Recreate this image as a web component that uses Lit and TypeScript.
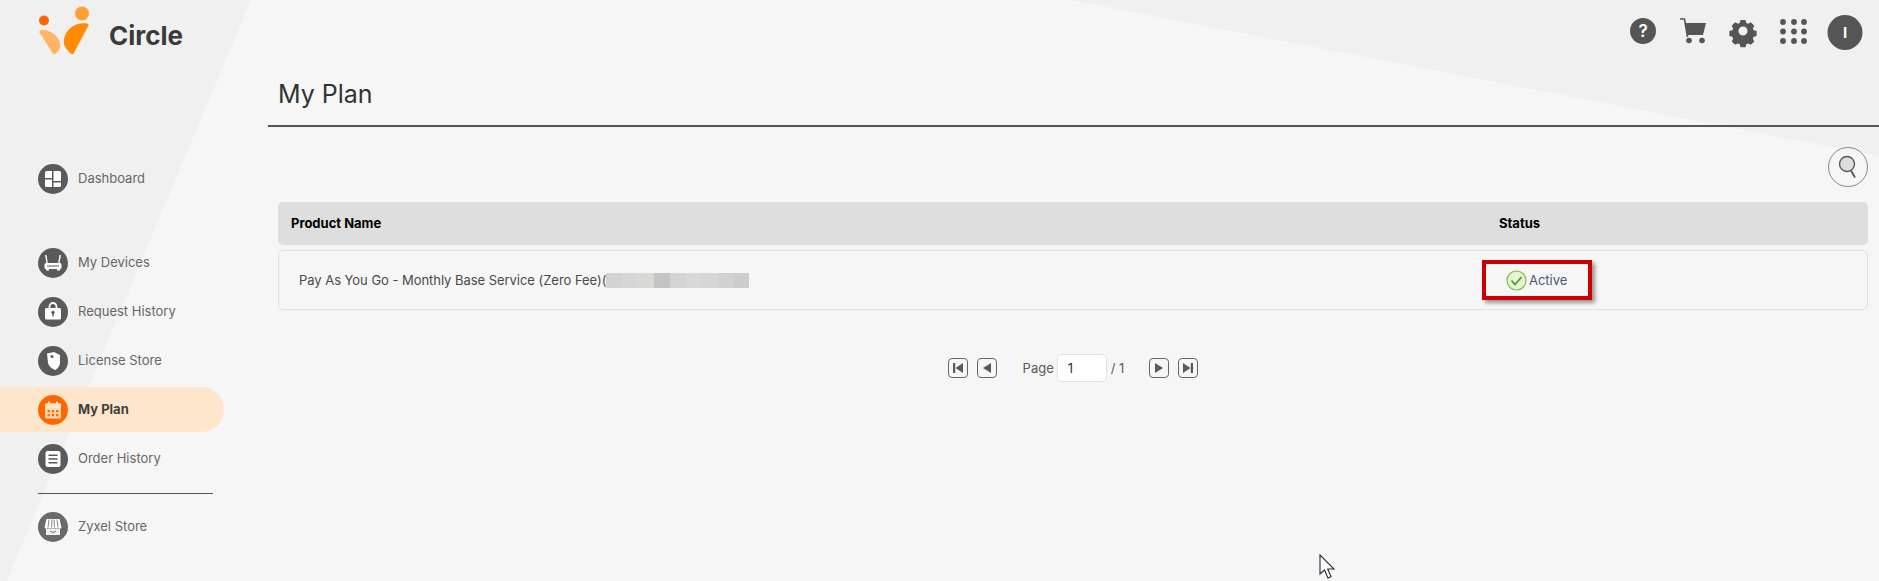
import { LitElement, html, css, svg } from "lit";
import { customElement } from "lit/decorators.js";

const navIcons: Record<string, unknown> = {
  dashboard: svg`<path d="M7 8.500a1.500 1.500 0 0 1 1.500-1.500H14v7H7zM7 15.500h7V23H8.500A1.500 1.500 0 0 1 7 21.500zM15.500 7h6A1.500 1.500 0 0 1 23 8.500V17h-7.500zM15.500 18.500H23v3a1.500 1.500 0 0 1-1.500 1.500h-6z" fill="#fff"/>`,
  devices: svg`<path d="M7 7l1.600 8.500h1.300L8.500 7zM23 7l-1.600 8.500h-1.300L21.500 7z" fill="#fff"/><rect x="6.500" y="15" width="17" height="6" rx="1.500" fill="#fff"/><rect x="9" y="17.500" width="12" height="1" fill="#5a5a5a"/><rect x="8" y="21" width="3" height="1.500" fill="#fff"/><rect x="19" y="21" width="3" height="1.500" fill="#fff"/>`,
  lock: svg`<path d="M11.500 12v-2.500a3.500 3.500 0 0 1 7 0V12" fill="none" stroke="#fff" stroke-width="1.800"/><rect x="7" y="11" width="16" height="11.500" rx="1.500" fill="#fff"/><circle cx="15" cy="15.500" r="1.700" fill="#5a5a5a"/><rect x="14.300" y="15.500" width="1.400" height="4" fill="#5a5a5a"/>`,
  tag: svg`<path d="M9 7.500l7-1.500 6 3v7.500c0 3-2 5.500-4.500 7.500-3.500-1-6.500-3.500-7.500-7z" fill="#fff"/><circle cx="14" cy="10.500" r="1.500" fill="#5a5a5a"/>`,
  calendar: svg`<rect x="7" y="8.500" width="16" height="15" rx="1.500" fill="#ffd9b3"/><rect x="7" y="8.500" width="16" height="4.500" rx="1.500" fill="#ffe8d0"/><rect x="10" y="6.500" width="2" height="3.500" rx="1" fill="#ffe8d0"/><rect x="18" y="6.500" width="2" height="3.500" rx="1" fill="#ffe8d0"/><g fill="#ff6600"><rect x="9.500" y="15" width="2.300" height="2.300"/><rect x="13.800" y="15" width="2.300" height="2.300"/><rect x="18.100" y="15" width="2.300" height="2.300"/><rect x="9.500" y="19" width="2.300" height="2.300"/><rect x="13.800" y="19" width="2.300" height="2.300"/><rect x="18.100" y="19" width="2.300" height="2.300"/></g>`,
  list: svg`<rect x="7.500" y="7" width="15" height="16" rx="2" fill="#fff"/><g fill="#5a5a5a"><rect x="10.500" y="10.500" width="9" height="1.500"/><rect x="10.500" y="14.200" width="9" height="1.500"/><rect x="10.500" y="18" width="9" height="1.500"/></g>`,
  store: svg`<path d="M8.500 7h13l2 8.500a2 2 0 0 1-3 .8 3 3 0 0 1-2.800 0 3 3 0 0 1-2.700 0 3 3 0 0 1-2.700 0 3 3 0 0 1-2.800 0 2 2 0 0 1-3-.8z" fill="#fff"/><path d="M11 7.500l-1 8M14 7.500l-.5 8M16 7.500l.5 8M19 7.500l1 8" stroke="#6a6a6a" stroke-width=".8"/><path d="M8 17h14v6H8z" fill="#fff" opacity=".9"/><path d="M12 19c1.500 1.800 4.500 1.800 6 0" fill="none" stroke="#6a6a6a" stroke-width="1"/>`,
};

const mosaic = ["#d3d3d3", "#d6d6d6", "#d8d8d4", "#c4c4c4", "#d4d4d4", "#d8d8d8", "#d6d6d6", "#d1d1d1", "#cdcdcd"];

@customElement("app-root")
export class AppRoot extends LitElement {
  static styles = css`
    :host {
      display: block;
      position: relative;
      height: 581px;
      overflow: hidden;
      background: #f6f6f6;
      font-family: Inter, "Liberation Sans", sans-serif;
      color: #555;
    }
    .bg { position: absolute; inset: 0; width: 100%; height: 100%; }
    .app { position: relative; display: flex; height: 581px; }
    aside { width: 224px; flex: none; display: flex; flex-direction: column; }
    .brand { height: 70px; display: flex; align-items: flex-start; position: relative; }
    .brand svg { flex: none; }
    .brand span {
      margin: 21px 0 0 -2px;
      font-size: 26px;
      font-weight: 700;
      line-height: 30px;
      color: #3a3a3a;
    }
    nav { display: flex; flex-direction: column; padding-top: 86px; }
    .group { display: flex; flex-direction: column; gap: 4px; }
    .group + .group { margin-top: 39px; }
    .item {
      height: 45px;
      display: flex;
      align-items: center;
      gap: 10px;
      padding-left: 38px;
      font-size: 13px;
      color: #666;
    }
    .item svg { flex: none; }
    .item span { margin-bottom: 2px; }
    .item.active {
      background: #fee6cc;
      border-radius: 0 23px 23px 0;
      color: #3f3f3f;
      font-weight: 700;
    }
    hr {
      border: 0;
      height: 1px;
      background: #555;
      width: 175px;
      margin: 12px 0 10px 38px;
    }
    main { flex: 1; margin-left: 44px; display: flex; flex-direction: column; min-width: 0; }
    .top {
      height: 62px;
      display: flex;
      justify-content: flex-end;
      align-items: center;
      padding-right: 16px;
      flex: none;
    }
    .title {
      height: 63px;
      border-bottom: 2px solid #555;
      padding-left: 10px;
      flex: none;
    }
    h1 {
      margin: 0;
      padding-top: 17px;
      font-size: 25px;
      font-weight: 400;
      line-height: 30px;
      color: #333;
    }
    .content { padding: 20px 11px 0 10px; }
    .tools { display: flex; justify-content: flex-end; margin-bottom: 15px; }
    .search {
      width: 40px;
      height: 40px;
      box-sizing: border-box;
      border: 1px solid #8a8a8a;
      border-radius: 50%;
      display: flex;
      align-items: center;
      justify-content: center;
    }
    .thead, .trow { display: grid; align-items: center; }
    .thead {
      height: 43px;
      box-sizing: border-box;
      padding-bottom: 1px;
      grid-template-columns: 1208px 1fr;
      padding-left: 13px;
      background: #dedede;
      border-radius: 5px;
      color: #000;
      font-size: 13px;
      font-weight: 700;
    }
    .trow {
      margin-top: 5px;
      height: 60px;
      box-sizing: border-box;
      border: 1px solid #e0e0e0;
      border-radius: 5px;
      grid-template-columns: 1183px 1fr;
      padding-left: 20px;
      font-size: 13px;
      letter-spacing: -0.04px;
      color: #4a4a4a;
    }
    .product { display: flex; align-items: center; }
    .mask { display: flex; height: 15px; }
    .mask i { display: block; width: 15.900px; height: 15px; }
    .mark {
      width: 110px;
      height: 40px;
      box-sizing: border-box;
      border: 4px solid #cc0000;
      box-shadow: 3px 3px 4px rgba(0, 0, 0, 0.4);
      display: flex;
      align-items: center;
      padding-left: 20px;
      gap: 2px;
      color: #4f5870;
    }
    .pager {
      margin-top: 44px;
      height: 28px;
      display: flex;
      align-items: center;
      justify-content: center;
      font-size: 13px;
      color: #5a5a5a;
    }
    .pg {
      width: 20px;
      height: 20px;
      box-sizing: border-box;
      border: 1px solid #666;
      border-radius: 4px;
      display: flex;
      align-items: center;
      justify-content: center;
      margin-right: 9px;
    }
    .pg.last { margin-right: 0; }
    .page-label { margin: 0 3px 0 17px; }
    .input {
      width: 50px;
      height: 28px;
      box-sizing: border-box;
      background: #fff;
      border: 1px solid #e2e2e2;
      border-radius: 5px;
      display: flex;
      align-items: center;
      padding-left: 10px;
      color: #333;
    }
    .of { margin: 0 25px 0 4px; }
    .cursor { position: absolute; left: 1319px; top: 554px; }
  `;

  private nav(key: string, label: string, active = false) {
    const fill = active ? "#ff6600" : key === "store" ? "#6a6a6a" : "#5a5a5a";
    return html`<div class="item ${active ? "active" : ""}">
      <svg width="30" height="30" viewBox="0 0 30 30">
        <circle cx="15" cy="15" r="15" fill=${fill}></circle>${navIcons[key]}
      </svg>
      <span>${label}</span>
    </div>`;
  }

  render() {
    return html`
      <svg class="bg" viewBox="0 0 1879 581" preserveAspectRatio="none">
        <polygon points="0,0 251,0 0,597" fill="#f0f0f0"></polygon>
        <polygon points="1070,0 1879,0 1879,156" fill="#f0f0f0"></polygon>
      </svg>
      <div class="app">
        <aside>
          <div class="brand">
            <svg width="111" height="70" viewBox="0 0 111 70">
              <circle cx="44" cy="20.500" r="5" fill="#ff6600"></circle>
              <circle cx="82" cy="13.500" r="7" fill="#ffa033"></circle>
              <path d="M39.500 32.500c-.5-1.800.5-2.800 2.500-2.800 10 .3 18 7.500 18.500 16 .1 2.500-3.500 7.300-5.500 8.300-1 .4-1.700 0-2.500-1z" fill="#ffb566"></path>
              <path d="M88.500 25.500c.3-1 0-1.800-1.500-2-12-1.800-24 7-23 20 .3 3 5 9 7.500 10.500 1 .4 1.700 0 2.200-.8z" fill="#ff8c00"></path>
            </svg>
            <span>Circle</span>
          </div>
          <nav>
            <div class="group">${this.nav("dashboard", "Dashboard")}</div>
            <div class="group">
              ${this.nav("devices", "My Devices")}
              ${this.nav("lock", "Request History")}
              ${this.nav("tag", "License Store")}
              ${this.nav("calendar", "My Plan", true)}
              ${this.nav("list", "Order History")}
            </div>
            <hr />
            ${this.nav("store", "Zyxel Store")}
          </nav>
        </aside>
        <main>
          <div class="top">
            <svg width="233" height="40" viewBox="0 0 233 40">
              <circle cx="13" cy="20" r="13" fill="#555"></circle>
              <text x="13" y="26" text-anchor="middle" font-size="17" font-weight="600" fill="#fff" font-family="Inter, sans-serif">?</text>
              <path d="M50 8h4.500l3 18" fill="none" stroke="#555" stroke-width="1.600"></path>
              <path d="M55 12h21l-3 12H57z" fill="#555"></path>
              <circle cx="59" cy="29.500" r="2.800" fill="#555"></circle><circle cx="72" cy="29.500" r="2.800" fill="#555"></circle>
              <path fill="#555" fill-rule="evenodd" d="M110 7h6l1 3.600 2.300 1 3.300-1.800 4.200 4.200-1.800 3.300 1 2.300 3.600 1v6l-3.600 1-1 2.300 1.800 3.300-4.200 4.200-3.300-1.800-2.300 1-1 3.600h-6l-1-3.600-2.300-1-3.300 1.800-4.200-4.200 1.800-3.300-1-2.300-3.600-1v-6l3.600-1 1-2.300-1.800-3.300 4.200-4.200 3.300 1.800 2.300-1zM113 15a5.500 5.500 0 1 0 0 11 5.500 5.500 0 0 0 0-11z" transform="translate(113 20) scale(.82) translate(-113 -20.500)"></path>
              <g fill="#555">
                <circle cx="153" cy="11" r="2.900"></circle><circle cx="164" cy="11" r="2.900"></circle><circle cx="174" cy="11" r="2.900"></circle>
                <circle cx="153" cy="20.500" r="2.900"></circle><circle cx="164" cy="20.500" r="2.900"></circle><circle cx="174" cy="20.500" r="2.900"></circle>
                <circle cx="153" cy="30" r="2.900"></circle><circle cx="164" cy="30" r="2.900"></circle><circle cx="174" cy="30" r="2.900"></circle>
              </g>
              <circle cx="215" cy="21.500" r="17.500" fill="#555"></circle>
              <text x="215" y="27" text-anchor="middle" font-size="15" font-weight="700" fill="#fff" font-family="Inter, sans-serif">I</text>
            </svg>
          </div>
          <div class="title"><h1>My Plan</h1></div>
          <div class="content">
            <div class="tools">
              <div class="search">
                <svg width="24" height="26" viewBox="0 0 24 26">
                  <circle cx="11" cy="10" r="7.500" fill="#ddd" stroke="#555" stroke-width="1.300"></circle>
                  <path d="M15 16.500l4 7" stroke="#555" stroke-width="1.800"></path>
                </svg>
              </div>
            </div>
            <div class="thead"><span>Product Name</span><span>Status</span></div>
            <div class="trow">
              <div class="product">
                <span>Pay As You Go - Monthly Base Service (Zero Fee)(</span>
                <div class="mask">${mosaic.map((c) => html`<i style="background:${c}"></i>`)}</div>
              </div>
              <div class="mark">
                <svg width="21" height="21" viewBox="0 0 21 21">
                  <circle cx="10.500" cy="10.500" r="9.500" fill="#e4f5d4" stroke="#7cc04a" stroke-width="1.200"></circle>
                  <path d="M5.500 10.500l3.500 4 6.500-7.500" fill="none" stroke="#4a9a1a" stroke-width="1.600"></path>
                </svg>
                <span>Active</span>
              </div>
            </div>
            <div class="pager">
              <div class="pg"><svg width="12" height="10" viewBox="0 0 12 10"><path d="M1 0h2.200v10H1zM11 0v10L3.500 5z" fill="#5a5a5a"></path></svg></div>
              <div class="pg"><svg width="10" height="10" viewBox="0 0 10 10"><path d="M9 0v10L1 5z" fill="#5a5a5a"></path></svg></div>
              <span class="page-label">Page</span>
              <div class="input">1</div>
              <span class="of">/ 1</span>
              <div class="pg"><svg width="10" height="10" viewBox="0 0 10 10"><path d="M1 0v10l8-5z" fill="#5a5a5a"></path></svg></div>
              <div class="pg last"><svg width="12" height="10" viewBox="0 0 12 10"><path d="M11 0H8.800v10H11zM1 0v10l7.500-5z" fill="#5a5a5a"></path></svg></div>
            </div>
          </div>
        </main>
      </div>
      <svg class="cursor" width="20" height="27" viewBox="0 0 20 27">
        <path d="M1 1v19l4.500-4 3.500 8 3-1.300-3.300-7.700H15z" fill="#fff" stroke="#2a2a3a" stroke-width="1.100"></path>
      </svg>
    `;
  }
}
